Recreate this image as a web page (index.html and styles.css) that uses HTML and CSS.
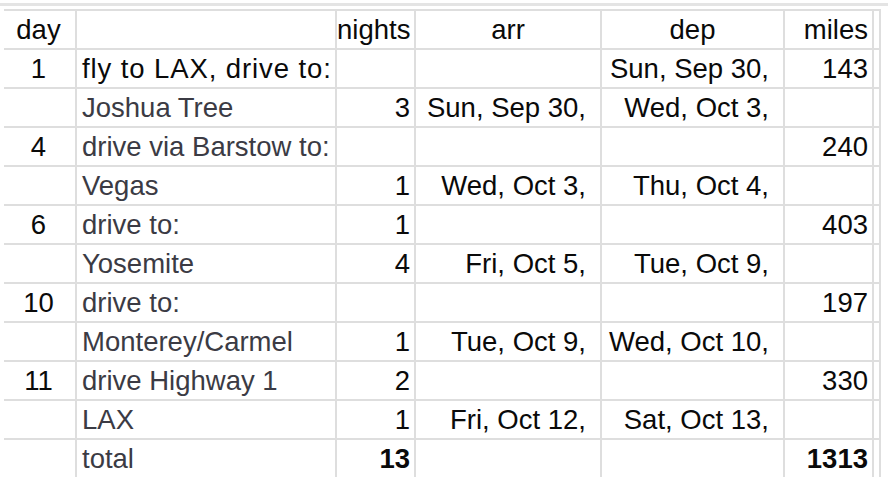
FILE: index.html
```html
<!DOCTYPE html>
<html>
<head>
<meta charset="utf-8">
<link rel="stylesheet" href="styles.css">
</head>
<body>
<div class="topbar"></div>
<div class="sheet">
  <div class="row head">
    <div class="c day">day</div><div class="c desc"></div><div class="c num">nights</div><div class="c ctr">arr</div><div class="c ctr">dep</div><div class="c num">miles</div><div class="c x"></div>
  </div>
  <div class="row">
    <div class="c day">1</div><div class="c desc first">fly to LAX, drive to:</div><div class="c num"></div><div class="c date"></div><div class="c date">Sun, Sep 30,</div><div class="c num">143</div><div class="c x"></div>
  </div>
  <div class="row">
    <div class="c day"></div><div class="c desc">Joshua Tree</div><div class="c num">3</div><div class="c date">Sun, Sep 30,</div><div class="c date">Wed, Oct 3,</div><div class="c num"></div><div class="c x"></div>
  </div>
  <div class="row">
    <div class="c day">4</div><div class="c desc">drive via Barstow to:</div><div class="c num"></div><div class="c date"></div><div class="c date"></div><div class="c num">240</div><div class="c x"></div>
  </div>
  <div class="row">
    <div class="c day"></div><div class="c desc">Vegas</div><div class="c num">1</div><div class="c date">Wed, Oct 3,</div><div class="c date">Thu, Oct 4,</div><div class="c num"></div><div class="c x"></div>
  </div>
  <div class="row">
    <div class="c day">6</div><div class="c desc">drive to:</div><div class="c num">1</div><div class="c date"></div><div class="c date"></div><div class="c num">403</div><div class="c x"></div>
  </div>
  <div class="row">
    <div class="c day"></div><div class="c desc">Yosemite</div><div class="c num">4</div><div class="c date">Fri, Oct 5,</div><div class="c date">Tue, Oct 9,</div><div class="c num"></div><div class="c x"></div>
  </div>
  <div class="row">
    <div class="c day">10</div><div class="c desc">drive to:</div><div class="c num"></div><div class="c date"></div><div class="c date"></div><div class="c num">197</div><div class="c x"></div>
  </div>
  <div class="row">
    <div class="c day"></div><div class="c desc">Monterey/Carmel</div><div class="c num">1</div><div class="c date">Tue, Oct 9,</div><div class="c date">Wed, Oct 10,</div><div class="c num"></div><div class="c x"></div>
  </div>
  <div class="row">
    <div class="c day">11</div><div class="c desc">drive Highway 1</div><div class="c num">2</div><div class="c date"></div><div class="c date"></div><div class="c num">330</div><div class="c x"></div>
  </div>
  <div class="row">
    <div class="c day"></div><div class="c desc">LAX</div><div class="c num">1</div><div class="c date">Fri, Oct 12,</div><div class="c date">Sat, Oct 13,</div><div class="c num"></div><div class="c x"></div>
  </div>
  <div class="row last">
    <div class="c day"></div><div class="c desc">total</div><div class="c num bold">13</div><div class="c date"></div><div class="c date"></div><div class="c num bold">1313</div><div class="c x"></div>
  </div>
</div>
</body>
</html>
```
FILE: styles.css
```css
html, body {
  margin: 0;
  padding: 0;
  background: #ffffff;
}
body {
  width: 888px;
  height: 496px;
  overflow: hidden;
  font-family: "Liberation Sans", Arial, sans-serif;
  font-size: 27.5px;
  color: #0a0a0a;
}
.topbar {
  margin-top: 3px;
  height: 3px;
  background: #e4e4e4;
}
.sheet {
  margin: 3px 0 0 4px;
  width: 875px;
  display: grid;
  grid-template-columns: 71px 258px 77px 184px 181px 87px 5px;
  grid-auto-rows: 37px;
  gap: 2px;
  padding: 2px 2px 0 0;
  background: #dedede;
}
.row {
  display: contents;
}
.row.last .c {
  height: 39px;
}
.c {
  background: #ffffff;
  line-height: 38px;
  white-space: nowrap;
  overflow: hidden;
}
.day {
  text-align: center;
  padding-right: 2px;
}
.desc {
  padding-left: 5px;
  color: #3b3b44;
}
.desc.first {
  color: #0a0a0a;
  letter-spacing: 0.9px;
}
.num {
  text-align: right;
  padding-right: 4px;
}
.ctr {
  text-align: center;
}
.date {
  text-align: right;
  padding-right: 14px;
}
.bold {
  font-weight: bold;
}
```
